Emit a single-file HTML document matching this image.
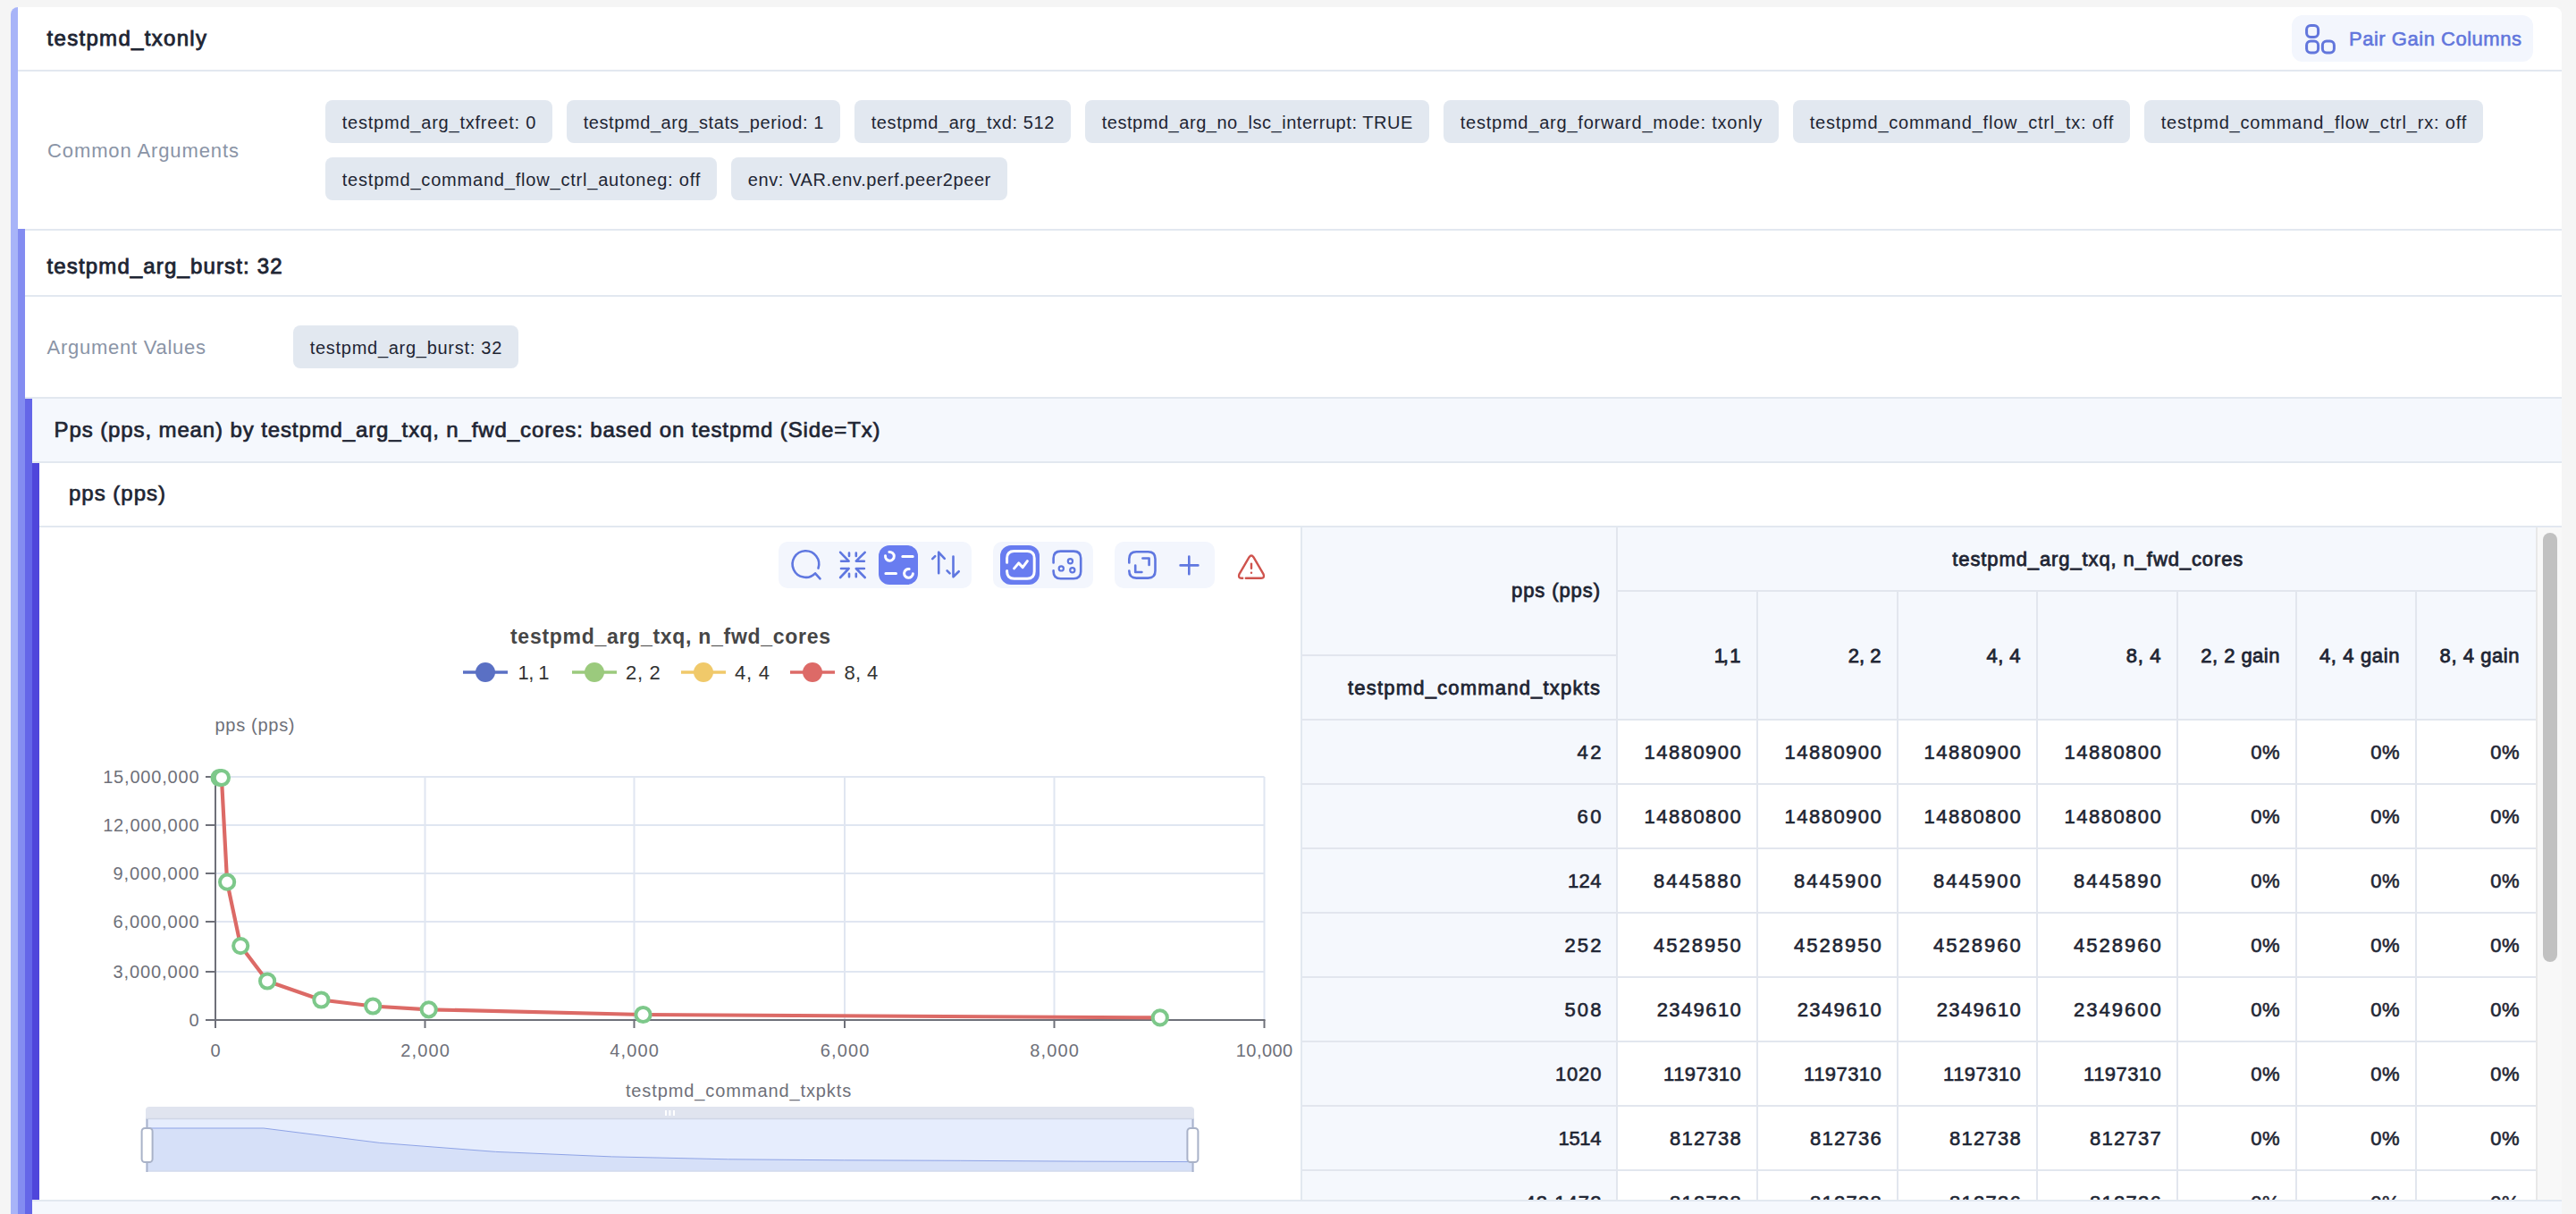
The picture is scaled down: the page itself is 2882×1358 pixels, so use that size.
<!DOCTYPE html>
<html><head><meta charset="utf-8">
<style>
html,body{margin:0;padding:0;}
body{width:2882px;height:1358px;overflow:hidden;background:#f5f5f5;position:relative;font-family:"Liberation Sans",sans-serif;color:#1e2533;}
.a{position:absolute;}
.t{position:absolute;white-space:nowrap;line-height:1;}
.ln{position:absolute;height:2px;background:#e2e8f0;}
svg{position:absolute;overflow:visible;}
</style></head><body>
<div class="a" style="left:12px;top:8px;width:2854px;height:1360px;background:#fff;border-radius:8px 8px 0 0;overflow:hidden;"><div class="a" style="left:0;top:0;width:8px;height:1360px;background:#a8b4f8;"></div></div>
<div class="a" style="left:2564px;top:17px;width:270px;height:52px;background:#f3f6fd;border-radius:12px;"></div>
<svg class="a" style="left:2576px;top:24px" width="40" height="40" viewBox="0 0 40 40"><g fill="none" stroke="#6276dc" stroke-width="3">
<rect x="4.6" y="4.6" width="13.0" height="12.8" rx="4.5"/><rect x="4.6" y="22.1" width="13.0" height="12.8" rx="4.5"/><rect x="22.4" y="22.1" width="13.0" height="12.8" rx="4.5"/></g></svg>
<div class="ln" style="left:20px;top:78px;width:2846px;"></div>
<div class="a" style="left:364px;top:112px;width:254px;height:48px;background:#e2e8f0;border-radius:8px;"></div>
<div class="a" style="left:634px;top:112px;width:306px;height:48px;background:#e2e8f0;border-radius:8px;"></div>
<div class="a" style="left:956px;top:112px;width:242px;height:48px;background:#e2e8f0;border-radius:8px;"></div>
<div class="a" style="left:1214px;top:112px;width:385px;height:48px;background:#e2e8f0;border-radius:8px;"></div>
<div class="a" style="left:1615px;top:112px;width:375px;height:48px;background:#e2e8f0;border-radius:8px;"></div>
<div class="a" style="left:2006px;top:112px;width:377px;height:48px;background:#e2e8f0;border-radius:8px;"></div>
<div class="a" style="left:2399px;top:112px;width:379px;height:48px;background:#e2e8f0;border-radius:8px;"></div>
<div class="a" style="left:364px;top:176px;width:438px;height:48px;background:#e2e8f0;border-radius:8px;"></div>
<div class="a" style="left:818px;top:176px;width:309px;height:48px;background:#e2e8f0;border-radius:8px;"></div>
<div class="a" style="left:328px;top:364px;width:252px;height:48px;background:#e2e8f0;border-radius:8px;"></div>
<div class="a" style="left:20px;top:256px;width:8px;height:1110px;background:#838cf1;"></div>
<div class="ln" style="left:28px;top:256px;width:2838px;"></div>
<div class="ln" style="left:28px;top:330px;width:2838px;"></div>
<div class="ln" style="left:28px;top:444px;width:2838px;"></div>
<div class="a" style="left:28px;top:446px;width:8px;height:920px;background:#6466e8;"></div>
<div class="a" style="left:36px;top:446px;width:2830px;height:70px;background:#f5f8fd;"></div>
<div class="ln" style="left:36px;top:516px;width:2830px;"></div>
<div class="a" style="left:36px;top:518px;width:8px;height:824px;background:#4f46db;"></div>
<div class="ln" style="left:44px;top:588px;width:2822px;"></div>
<div class="ln" style="left:36px;top:1342px;width:2830px;"></div>
<div class="a" style="left:36px;top:1344px;width:2830px;height:20px;background:#f5f8fd;"></div>
<div class="a" style="left:871px;top:606px;width:216px;height:52px;background:#f3f6fd;border-radius:10px;"></div>
<div class="a" style="left:1111px;top:606px;width:112px;height:52px;background:#f3f6fd;border-radius:10px;"></div>
<div class="a" style="left:1247px;top:606px;width:112px;height:52px;background:#f3f6fd;border-radius:10px;"></div>
<div class="a" style="left:983px;top:610px;width:44px;height:44px;background:#687cf0;border-radius:12px;"></div>
<div class="a" style="left:1119px;top:610px;width:44px;height:44px;background:#687cf0;border-radius:12px;"></div>
<svg class="a" style="left:0;top:0" width="2882" height="1358" viewBox="0 0 2882 1358"><g fill="none" stroke="#5f77e0" stroke-width="2.6" stroke-linecap="round" stroke-linejoin="round"><path d="M915.48,635.57 A14.8,14.8 0 1 0 912.05,641.28 L917.5,647.3"/><path d="M940.1,617.8 L949.6,627.7 M941,627.7 L949.6,627.7 M950,618.6 L950,622 M957.8,618.6 L957.8,622 M967.7,617.8 L957.8,627.7 L966.9,627.7"/><path d="M940.1,646 L949.6,636 M941,636 L949.6,636 M950,641.8 L950,645.2 M957.8,641.8 L957.8,645.2 M967.7,646 L957.8,636 L966.9,636"/><path d="M1050.2,617.8 L1050.2,641.2 M1050.2,617.8 L1056.8,624.8 M1043.2,625.2 L1046.2,622.2"/><path d="M1066.5,622.6 L1066.5,645.3 M1066.5,645.3 L1072.7,639.2 M1059.6,638.3 L1062.6,641.3"/><path d="M1178.6,629.4 L1178.6,624.6 Q1178.6,616.6 1186.6,616.6 L1201.2,616.6 Q1209.2,616.6 1209.2,624.6 L1209.2,639.3 Q1209.2,647.3 1201.2,647.3 L1186.6,647.3 Q1178.6,647.3 1178.6,639.3 L1178.6,638.4"/><circle cx="1197.4" cy="627.8" r="2.6" stroke-width="2.2"/><circle cx="1187.3" cy="635.9" r="2.6" stroke-width="2.2"/><circle cx="1199.8" cy="637.7" r="2.6" stroke-width="2.2"/><path d="M1263.3,629.4 L1263.3,625.3 Q1263.3,617.3 1271.3,617.3 L1284.5,617.3 Q1292.5,617.3 1292.5,625.3 L1292.5,638.6 Q1292.5,646.6 1284.5,646.6 L1271.3,646.6 Q1263.3,646.6 1263.3,638.6 L1263.3,638.8"/><path d="M1278.4,624.5 L1285.6,624.5 L1285.6,632 M1270.2,632.6 L1270.2,640 L1277.4,640"/><path d="M1320.6,632.4 L1340.4,632.4 M1330.3,622.6 L1330.3,642.2"/></g><g fill="none" stroke="#fff" stroke-width="3" stroke-linecap="round"><path d="M994.89,617.43 A4.9,4.9 0 1 1 990.54,621.70"/><path d="M1009.8,622.5 L1021.2,622.5 M990.9,641.4 L1002.5,641.4"/><path d="M1021.38,641.78 A4.9,4.9 0 1 1 1017.14,636.54"/><path d="M1126.6,629.2 L1126.6,624.4 Q1126.6,616.4 1134.6,616.4 L1149.2,616.4 Q1157.2,616.4 1157.2,624.4 L1157.2,639.3 Q1157.2,647.3 1149.2,647.3 L1134.6,647.3 Q1126.6,647.3 1126.6,639.3 L1126.6,638.6"/><path d="M1134.6,635.9 L1139.7,629.9 L1144.2,634.6 L1149.4,627.6" stroke-linejoin="round"/></g><g fill="none" stroke="#cf534d" stroke-width="2.4" stroke-linecap="round" stroke-linejoin="round"><path d="M1390.2,646.8 L1389,646.8 Q1384.8,646.8 1386.4,642.4 L1397.6,623.2 Q1400,619.8 1402.4,623.2 L1413.6,642.4 Q1415.2,646.8 1411,646.8 L1393.8,646.8"/><path d="M1400,630.6 L1400,635.8"/><path d="M1400,640.6 L1400,640.8"/></g><path d="M518,752 L568,752" stroke="#5a70c4" stroke-width="3.6"/><circle cx="543" cy="752" r="11" fill="#5a70c4"/><path d="M640,752 L690,752" stroke="#9bca7d" stroke-width="3.6"/><circle cx="665" cy="752" r="11" fill="#9bca7d"/><path d="M762,752 L812,752" stroke="#f0c96a" stroke-width="3.6"/><circle cx="787" cy="752" r="11" fill="#f0c96a"/><path d="M884,752 L934,752" stroke="#dd6a67" stroke-width="3.6"/><circle cx="909" cy="752" r="11" fill="#dd6a67"/><path d="M241,869 L1414.5,869" stroke="#e0e6f1" stroke-width="2"/><path d="M241,923 L1414.5,923" stroke="#e0e6f1" stroke-width="2"/><path d="M241,977 L1414.5,977" stroke="#e0e6f1" stroke-width="2"/><path d="M241,1031 L1414.5,1031" stroke="#e0e6f1" stroke-width="2"/><path d="M241,1087 L1414.5,1087" stroke="#e0e6f1" stroke-width="2"/><path d="M475.5,869 L475.5,1141" stroke="#e0e6f1" stroke-width="2"/><path d="M709.5,869 L709.5,1141" stroke="#e0e6f1" stroke-width="2"/><path d="M945,869 L945,1141" stroke="#e0e6f1" stroke-width="2"/><path d="M1179.5,869 L1179.5,1141" stroke="#e0e6f1" stroke-width="2"/><path d="M1414.5,869 L1414.5,1141" stroke="#e0e6f1" stroke-width="2"/><path d="M241,869 L241,1142 M240,1141 L1415.5,1141" stroke="#6e7079" stroke-width="2"/><path d="M230,869 L241,869" stroke="#6e7079" stroke-width="2"/><path d="M230,923 L241,923" stroke="#6e7079" stroke-width="2"/><path d="M230,977 L241,977" stroke="#6e7079" stroke-width="2"/><path d="M230,1031 L241,1031" stroke="#6e7079" stroke-width="2"/><path d="M230,1087 L241,1087" stroke="#6e7079" stroke-width="2"/><path d="M230,1141 L241,1141" stroke="#6e7079" stroke-width="2"/><path d="M241,1141 L241,1150" stroke="#6e7079" stroke-width="2"/><path d="M475.5,1141 L475.5,1150" stroke="#6e7079" stroke-width="2"/><path d="M709.5,1141 L709.5,1150" stroke="#6e7079" stroke-width="2"/><path d="M945,1141 L945,1150" stroke="#6e7079" stroke-width="2"/><path d="M1179.5,1141 L1179.5,1150" stroke="#6e7079" stroke-width="2"/><path d="M1414.5,1141 L1414.5,1150" stroke="#6e7079" stroke-width="2"/><path d="M245.6,870 L247.9,870 L254.1,986.7 L269.2,1058.1 L299.1,1097.5 L359.4,1118.5 L417.2,1125.5 L479.7,1129.3 L719.5,1135 L1297.8,1138.4" fill="none" stroke="#dc6a66" stroke-width="4.2" stroke-linejoin="round"/><circle cx="245.6" cy="870" r="8.1" fill="#fff" stroke="#7dc88a" stroke-width="4"/><circle cx="247.9" cy="870" r="8.1" fill="#fff" stroke="#7dc88a" stroke-width="4"/><circle cx="254.1" cy="986.7" r="8.1" fill="#fff" stroke="#7dc88a" stroke-width="4"/><circle cx="269.2" cy="1058.1" r="8.1" fill="#fff" stroke="#7dc88a" stroke-width="4"/><circle cx="299.1" cy="1097.5" r="8.1" fill="#fff" stroke="#7dc88a" stroke-width="4"/><circle cx="359.4" cy="1118.5" r="8.1" fill="#fff" stroke="#7dc88a" stroke-width="4"/><circle cx="417.2" cy="1125.5" r="8.1" fill="#fff" stroke="#7dc88a" stroke-width="4"/><circle cx="479.7" cy="1129.3" r="8.1" fill="#fff" stroke="#7dc88a" stroke-width="4"/><circle cx="719.5" cy="1135" r="8.1" fill="#fff" stroke="#7dc88a" stroke-width="4"/><circle cx="1297.8" cy="1138.4" r="8.1" fill="#fff" stroke="#7dc88a" stroke-width="4"/><path d="M163,1252 L163,1242 Q163,1238 167,1238 L1332,1238 Q1336,1238 1336,1242 L1336,1252 Z" fill="#e0e4ef"/><rect x="163" y="1252" width="1173" height="58.5" fill="#e6edfd"/><path d="M163,1251.5 L1336,1251.5" stroke="#cfd6e6" stroke-width="1.5"/><path d="M165,1310.5 L165.0,1262.0 L294.9,1262.0 L424.8,1278.4 L554.7,1288.4 L684.6,1293.9 L814.4,1296.8 L944.3,1297.8 L1074.2,1298.3 L1204.1,1299.1 L1334.0,1299.6 L1334,1310.5 Z" fill="#d6e0f8"/><path d="M165.0,1262.0 L294.9,1262.0 L424.8,1278.4 L554.7,1288.4 L684.6,1293.9 L814.4,1296.8 L944.3,1297.8 L1074.2,1298.3 L1204.1,1299.1 L1334.0,1299.6" fill="none" stroke="#8ea3e6" stroke-width="1"/><path d="M163,1310 L1336,1310" stroke="#d3d9e8" stroke-width="1"/><path d="M745,1242 L745,1248 M749.4,1242 L749.4,1248 M754,1242 L754,1248" stroke="#fff" stroke-width="2"/><path d="M164.5,1252 L164.5,1311 M1334.5,1252 L1334.5,1311" stroke="#a9b3cc" stroke-width="2"/><rect x="158.6" y="1262" width="12" height="38" rx="3.5" fill="#fff" stroke="#a9b2c8" stroke-width="2"/><rect x="1328.4" y="1262" width="12" height="38" rx="3.5" fill="#fff" stroke="#a9b2c8" stroke-width="2"/></svg>
<div class="a" style="left:1455px;top:590px;width:2px;height:752px;background:#e2e8f0;"></div>
<div class="a" style="left:1457px;top:590px;width:1380px;height:215px;background:#f5f8fd;"></div>
<div class="a" style="left:1457px;top:805px;width:352px;height:537px;background:#f5f8fd;"></div>
<div class="a" style="left:2837px;top:590px;width:29px;height:752px;background:#f8f8f8;border-left:2px solid #e8e8e8;box-sizing:border-box;"></div>
<div class="a" style="left:2845px;top:596px;width:16px;height:480px;background:#c1c1c1;border-radius:8px;"></div>
<div class="a" style="left:1808px;top:590px;width:2px;height:752px;background:#e2e6ee;"></div>
<div class="a" style="left:1965px;top:661px;width:2px;height:681px;background:#e2e6ee;"></div>
<div class="a" style="left:2122px;top:661px;width:2px;height:681px;background:#e2e6ee;"></div>
<div class="a" style="left:2278px;top:661px;width:2px;height:681px;background:#e2e6ee;"></div>
<div class="a" style="left:2435px;top:661px;width:2px;height:681px;background:#e2e6ee;"></div>
<div class="a" style="left:2568px;top:661px;width:2px;height:681px;background:#e2e6ee;"></div>
<div class="a" style="left:2702px;top:661px;width:2px;height:681px;background:#e2e6ee;"></div>
<div class="a" style="left:1809px;top:660px;width:1028px;height:2px;background:#e2e6ee;"></div>
<div class="a" style="left:1457px;top:732px;width:352px;height:2px;background:#e2e6ee;"></div>
<div class="a" style="left:1457px;top:804px;width:1380px;height:2px;background:#e2e6ee;"></div>
<div class="a" style="left:1457px;top:876px;width:1380px;height:2px;background:#e2e6ee;"></div>
<div class="a" style="left:1457px;top:948px;width:1380px;height:2px;background:#e2e6ee;"></div>
<div class="a" style="left:1457px;top:1020px;width:1380px;height:2px;background:#e2e6ee;"></div>
<div class="a" style="left:1457px;top:1092px;width:1380px;height:2px;background:#e2e6ee;"></div>
<div class="a" style="left:1457px;top:1164px;width:1380px;height:2px;background:#e2e6ee;"></div>
<div class="a" style="left:1457px;top:1236px;width:1380px;height:2px;background:#e2e6ee;"></div>
<div class="a" style="left:1457px;top:1308px;width:1380px;height:2px;background:#e2e6ee;"></div>
<div class="ln" style="left:36px;top:1342px;width:2830px;"></div>
<div class="a" style="left:36px;top:1344px;width:2830px;height:20px;background:#f5f8fd;"></div>
<div class="t" style="left:52.5px;top:31.0px;font-size:24px;color:#1e2533;letter-spacing:1.314px;-webkit-text-stroke:0.85px #1e2533;">testpmd_txonly</div>
<div class="t" style="left:2628.0px;top:33.0px;font-size:22px;color:#6276dc;letter-spacing:0.522px;-webkit-text-stroke:0.6px #6276dc;">Pair Gain Columns</div>
<div class="t" style="left:53.0px;top:158.0px;font-size:22px;color:#8a94a6;letter-spacing:0.898px;">Common Arguments</div>
<div class="t" style="left:382.7px;top:127.3px;font-size:20px;color:#1e2533;letter-spacing:0.785px;">testpmd_arg_txfreet: 0</div>
<div class="t" style="left:652.7px;top:127.3px;font-size:20px;color:#1e2533;letter-spacing:0.581px;">testpmd_arg_stats_period: 1</div>
<div class="t" style="left:974.7px;top:127.3px;font-size:20px;color:#1e2533;letter-spacing:0.586px;">testpmd_arg_txd: 512</div>
<div class="t" style="left:1232.7px;top:127.3px;font-size:20px;color:#1e2533;letter-spacing:0.539px;">testpmd_arg_no_lsc_interrupt: TRUE</div>
<div class="t" style="left:1633.7px;top:127.3px;font-size:20px;color:#1e2533;letter-spacing:0.777px;">testpmd_arg_forward_mode: txonly</div>
<div class="t" style="left:2024.7px;top:127.3px;font-size:20px;color:#1e2533;letter-spacing:0.793px;">testpmd_command_flow_ctrl_tx: off</div>
<div class="t" style="left:2417.7px;top:127.3px;font-size:20px;color:#1e2533;letter-spacing:0.821px;">testpmd_command_flow_ctrl_rx: off</div>
<div class="t" style="left:382.7px;top:191.3px;font-size:20px;color:#1e2533;letter-spacing:0.801px;">testpmd_command_flow_ctrl_autoneg: off</div>
<div class="t" style="left:836.7px;top:191.3px;font-size:20px;color:#1e2533;letter-spacing:0.597px;">env: VAR.env.perf.peer2peer</div>
<div class="t" style="left:346.7px;top:379.3px;font-size:20px;color:#1e2533;letter-spacing:0.724px;">testpmd_arg_burst: 32</div>
<div class="t" style="left:52.5px;top:286.0px;font-size:24px;color:#1e2533;letter-spacing:1.143px;-webkit-text-stroke:0.85px #1e2533;">testpmd_arg_burst: 32</div>
<div class="t" style="left:52.5px;top:378.0px;font-size:22px;color:#8a94a6;letter-spacing:0.740px;">Argument Values</div>
<div class="t" style="left:60.6px;top:469.0px;font-size:24px;color:#1e2533;letter-spacing:0.886px;-webkit-text-stroke:0.7px #1e2533;">Pps (pps, mean) by testpmd_arg_txq, n_fwd_cores: based on testpmd (Side=Tx)</div>
<div class="t" style="left:77.0px;top:540.0px;font-size:24px;color:#1e2533;letter-spacing:0.994px;-webkit-text-stroke:0.7px #1e2533;">pps (pps)</div>
<div class="t" style="left:579.6px;top:741.6px;font-size:22px;color:#333;letter-spacing:-0.568px;">1, 1</div>
<div class="t" style="left:700.0px;top:741.6px;font-size:22px;color:#333;letter-spacing:0.666px;">2, 2</div>
<div class="t" style="left:822.0px;top:741.6px;font-size:22px;color:#333;letter-spacing:0.766px;">4, 4</div>
<div class="t" style="left:944.5px;top:741.6px;font-size:22px;color:#333;letter-spacing:0.366px;">8, 4</div>
<div class="t" style="left:571.0px;top:701.0px;font-size:23px;color:#464646;font-weight:700;letter-spacing:0.714px;">testpmd_arg_txq, n_fwd_cores</div>
<div class="t" style="left:115.2px;top:859.0px;font-size:20px;color:#6e7079;letter-spacing:0.810px;">15,000,000</div>
<div class="t" style="left:115.2px;top:913.0px;font-size:20px;color:#6e7079;letter-spacing:0.810px;">12,000,000</div>
<div class="t" style="left:126.6px;top:967.0px;font-size:20px;color:#6e7079;letter-spacing:0.877px;">9,000,000</div>
<div class="t" style="left:126.6px;top:1021.0px;font-size:20px;color:#6e7079;letter-spacing:0.877px;">6,000,000</div>
<div class="t" style="left:126.6px;top:1077.0px;font-size:20px;color:#6e7079;letter-spacing:0.877px;">3,000,000</div>
<div class="t" style="left:211.5px;top:1131.0px;font-size:20px;color:#6e7079;letter-spacing:1.375px;">0</div>
<div class="t" style="left:235.4px;top:1165.0px;font-size:20px;color:#6e7079;letter-spacing:1.375px;">0</div>
<div class="t" style="left:448.2px;top:1165.0px;font-size:20px;color:#6e7079;letter-spacing:1.134px;">2,000</div>
<div class="t" style="left:682.2px;top:1165.0px;font-size:20px;color:#6e7079;letter-spacing:1.134px;">4,000</div>
<div class="t" style="left:917.7px;top:1165.0px;font-size:20px;color:#6e7079;letter-spacing:1.134px;">6,000</div>
<div class="t" style="left:1152.2px;top:1165.0px;font-size:20px;color:#6e7079;letter-spacing:1.134px;">8,000</div>
<div class="t" style="left:1382.8px;top:1165.0px;font-size:20px;color:#6e7079;letter-spacing:0.446px;">10,000</div>
<div class="t" style="left:240.5px;top:801.0px;font-size:20px;color:#6e7079;letter-spacing:0.703px;">pps (pps)</div>
<div class="t" style="left:699.9px;top:1210.0px;font-size:20px;color:#6e7079;letter-spacing:0.898px;">testpmd_command_txpkts</div>
<div class="t" style="left:1691.0px;top:650.0px;font-size:22px;color:#1e2533;letter-spacing:0.910px;-webkit-text-stroke:0.8px #1e2533;">pps (pps)</div>
<div class="t" style="left:1508.0px;top:758.7px;font-size:22px;color:#1e2533;letter-spacing:1.201px;-webkit-text-stroke:0.8px #1e2533;">testpmd_command_txpkts</div>
<div class="t" style="left:2184.3px;top:615.0px;font-size:22px;color:#1e2533;letter-spacing:0.895px;-webkit-text-stroke:0.8px #1e2533;">testpmd_arg_txq, n_fwd_cores</div>
<div class="t" style="left:1917.8px;top:723.0px;font-size:22px;color:#1e2533;letter-spacing:-2.368px;-webkit-text-stroke:0.8px #1e2533;">1, 1</div>
<div class="t" style="left:2067.8px;top:723.0px;font-size:22px;color:#1e2533;letter-spacing:-0.034px;-webkit-text-stroke:0.8px #1e2533;">2, 2</div>
<div class="t" style="left:2222.5px;top:723.0px;font-size:22px;color:#1e2533;letter-spacing:0.399px;-webkit-text-stroke:0.8px #1e2533;">4, 4</div>
<div class="t" style="left:2378.8px;top:723.0px;font-size:22px;color:#1e2533;letter-spacing:0.632px;-webkit-text-stroke:0.8px #1e2533;">8, 4</div>
<div class="t" style="left:2462.3px;top:723.0px;font-size:22px;color:#1e2533;letter-spacing:0.462px;-webkit-text-stroke:0.8px #1e2533;">2, 2 gain</div>
<div class="t" style="left:2594.9px;top:723.0px;font-size:22px;color:#1e2533;letter-spacing:0.637px;-webkit-text-stroke:0.8px #1e2533;">4, 4 gain</div>
<div class="t" style="left:2729.6px;top:723.0px;font-size:22px;color:#1e2533;letter-spacing:0.549px;-webkit-text-stroke:0.8px #1e2533;">8, 4 gain</div>
<div class="t" style="left:1764.6px;top:831.0px;font-size:22px;color:#1e2533;letter-spacing:2.316px;-webkit-text-stroke:0.6px #1e2533;">42</div>
<div class="t" style="left:1839.5px;top:831.0px;font-size:22px;color:#1e2533;letter-spacing:1.487px;-webkit-text-stroke:0.6px #1e2533;">14880900</div>
<div class="t" style="left:1996.5px;top:831.0px;font-size:22px;color:#1e2533;letter-spacing:1.487px;-webkit-text-stroke:0.6px #1e2533;">14880900</div>
<div class="t" style="left:2152.5px;top:831.0px;font-size:22px;color:#1e2533;letter-spacing:1.487px;-webkit-text-stroke:0.6px #1e2533;">14880900</div>
<div class="t" style="left:2309.5px;top:831.0px;font-size:22px;color:#1e2533;letter-spacing:1.487px;-webkit-text-stroke:0.6px #1e2533;">14880800</div>
<div class="t" style="left:2518.2px;top:831.0px;font-size:22px;color:#1e2533;letter-spacing:0.503px;-webkit-text-stroke:0.6px #1e2533;">0%</div>
<div class="t" style="left:2652.2px;top:831.0px;font-size:22px;color:#1e2533;letter-spacing:0.503px;-webkit-text-stroke:0.6px #1e2533;">0%</div>
<div class="t" style="left:2786.2px;top:831.0px;font-size:22px;color:#1e2533;letter-spacing:0.503px;-webkit-text-stroke:0.6px #1e2533;">0%</div>
<div class="t" style="left:1764.6px;top:903.0px;font-size:22px;color:#1e2533;letter-spacing:2.316px;-webkit-text-stroke:0.6px #1e2533;">60</div>
<div class="t" style="left:1839.5px;top:903.0px;font-size:22px;color:#1e2533;letter-spacing:1.487px;-webkit-text-stroke:0.6px #1e2533;">14880800</div>
<div class="t" style="left:1996.5px;top:903.0px;font-size:22px;color:#1e2533;letter-spacing:1.487px;-webkit-text-stroke:0.6px #1e2533;">14880900</div>
<div class="t" style="left:2152.5px;top:903.0px;font-size:22px;color:#1e2533;letter-spacing:1.487px;-webkit-text-stroke:0.6px #1e2533;">14880800</div>
<div class="t" style="left:2309.5px;top:903.0px;font-size:22px;color:#1e2533;letter-spacing:1.487px;-webkit-text-stroke:0.6px #1e2533;">14880800</div>
<div class="t" style="left:2518.2px;top:903.0px;font-size:22px;color:#1e2533;letter-spacing:0.503px;-webkit-text-stroke:0.6px #1e2533;">0%</div>
<div class="t" style="left:2652.2px;top:903.0px;font-size:22px;color:#1e2533;letter-spacing:0.503px;-webkit-text-stroke:0.6px #1e2533;">0%</div>
<div class="t" style="left:2786.2px;top:903.0px;font-size:22px;color:#1e2533;letter-spacing:0.503px;-webkit-text-stroke:0.6px #1e2533;">0%</div>
<div class="t" style="left:1754.1px;top:975.0px;font-size:22px;color:#1e2533;letter-spacing:0.291px;-webkit-text-stroke:0.6px #1e2533;">124</div>
<div class="t" style="left:1850.0px;top:975.0px;font-size:22px;color:#1e2533;letter-spacing:2.024px;-webkit-text-stroke:0.6px #1e2533;">8445880</div>
<div class="t" style="left:2007.0px;top:975.0px;font-size:22px;color:#1e2533;letter-spacing:2.024px;-webkit-text-stroke:0.6px #1e2533;">8445900</div>
<div class="t" style="left:2163.0px;top:975.0px;font-size:22px;color:#1e2533;letter-spacing:2.024px;-webkit-text-stroke:0.6px #1e2533;">8445900</div>
<div class="t" style="left:2320.0px;top:975.0px;font-size:22px;color:#1e2533;letter-spacing:2.024px;-webkit-text-stroke:0.6px #1e2533;">8445890</div>
<div class="t" style="left:2518.2px;top:975.0px;font-size:22px;color:#1e2533;letter-spacing:0.503px;-webkit-text-stroke:0.6px #1e2533;">0%</div>
<div class="t" style="left:2652.2px;top:975.0px;font-size:22px;color:#1e2533;letter-spacing:0.503px;-webkit-text-stroke:0.6px #1e2533;">0%</div>
<div class="t" style="left:2786.2px;top:975.0px;font-size:22px;color:#1e2533;letter-spacing:0.503px;-webkit-text-stroke:0.6px #1e2533;">0%</div>
<div class="t" style="left:1750.4px;top:1047.0px;font-size:22px;color:#1e2533;letter-spacing:2.141px;-webkit-text-stroke:0.6px #1e2533;">252</div>
<div class="t" style="left:1850.0px;top:1047.0px;font-size:22px;color:#1e2533;letter-spacing:2.024px;-webkit-text-stroke:0.6px #1e2533;">4528950</div>
<div class="t" style="left:2007.0px;top:1047.0px;font-size:22px;color:#1e2533;letter-spacing:2.024px;-webkit-text-stroke:0.6px #1e2533;">4528950</div>
<div class="t" style="left:2163.0px;top:1047.0px;font-size:22px;color:#1e2533;letter-spacing:2.024px;-webkit-text-stroke:0.6px #1e2533;">4528960</div>
<div class="t" style="left:2320.0px;top:1047.0px;font-size:22px;color:#1e2533;letter-spacing:2.024px;-webkit-text-stroke:0.6px #1e2533;">4528960</div>
<div class="t" style="left:2518.2px;top:1047.0px;font-size:22px;color:#1e2533;letter-spacing:0.503px;-webkit-text-stroke:0.6px #1e2533;">0%</div>
<div class="t" style="left:2652.2px;top:1047.0px;font-size:22px;color:#1e2533;letter-spacing:0.503px;-webkit-text-stroke:0.6px #1e2533;">0%</div>
<div class="t" style="left:2786.2px;top:1047.0px;font-size:22px;color:#1e2533;letter-spacing:0.503px;-webkit-text-stroke:0.6px #1e2533;">0%</div>
<div class="t" style="left:1750.4px;top:1119.0px;font-size:22px;color:#1e2533;letter-spacing:2.141px;-webkit-text-stroke:0.6px #1e2533;">508</div>
<div class="t" style="left:1853.7px;top:1119.0px;font-size:22px;color:#1e2533;letter-spacing:1.407px;-webkit-text-stroke:0.6px #1e2533;">2349610</div>
<div class="t" style="left:2010.7px;top:1119.0px;font-size:22px;color:#1e2533;letter-spacing:1.407px;-webkit-text-stroke:0.6px #1e2533;">2349610</div>
<div class="t" style="left:2166.7px;top:1119.0px;font-size:22px;color:#1e2533;letter-spacing:1.407px;-webkit-text-stroke:0.6px #1e2533;">2349610</div>
<div class="t" style="left:2320.0px;top:1119.0px;font-size:22px;color:#1e2533;letter-spacing:2.024px;-webkit-text-stroke:0.6px #1e2533;">2349600</div>
<div class="t" style="left:2518.2px;top:1119.0px;font-size:22px;color:#1e2533;letter-spacing:0.503px;-webkit-text-stroke:0.6px #1e2533;">0%</div>
<div class="t" style="left:2652.2px;top:1119.0px;font-size:22px;color:#1e2533;letter-spacing:0.503px;-webkit-text-stroke:0.6px #1e2533;">0%</div>
<div class="t" style="left:2786.2px;top:1119.0px;font-size:22px;color:#1e2533;letter-spacing:0.503px;-webkit-text-stroke:0.6px #1e2533;">0%</div>
<div class="t" style="left:1739.9px;top:1191.0px;font-size:22px;color:#1e2533;letter-spacing:0.849px;-webkit-text-stroke:0.6px #1e2533;">1020</div>
<div class="t" style="left:1861.1px;top:1191.0px;font-size:22px;color:#1e2533;letter-spacing:0.447px;-webkit-text-stroke:0.6px #1e2533;">1197310</div>
<div class="t" style="left:2018.1px;top:1191.0px;font-size:22px;color:#1e2533;letter-spacing:0.447px;-webkit-text-stroke:0.6px #1e2533;">1197310</div>
<div class="t" style="left:2174.1px;top:1191.0px;font-size:22px;color:#1e2533;letter-spacing:0.447px;-webkit-text-stroke:0.6px #1e2533;">1197310</div>
<div class="t" style="left:2331.1px;top:1191.0px;font-size:22px;color:#1e2533;letter-spacing:0.447px;-webkit-text-stroke:0.6px #1e2533;">1197310</div>
<div class="t" style="left:2518.2px;top:1191.0px;font-size:22px;color:#1e2533;letter-spacing:0.503px;-webkit-text-stroke:0.6px #1e2533;">0%</div>
<div class="t" style="left:2652.2px;top:1191.0px;font-size:22px;color:#1e2533;letter-spacing:0.503px;-webkit-text-stroke:0.6px #1e2533;">0%</div>
<div class="t" style="left:2786.2px;top:1191.0px;font-size:22px;color:#1e2533;letter-spacing:0.503px;-webkit-text-stroke:0.6px #1e2533;">0%</div>
<div class="t" style="left:1743.6px;top:1263.0px;font-size:22px;color:#1e2533;letter-spacing:-0.384px;-webkit-text-stroke:0.6px #1e2533;">1514</div>
<div class="t" style="left:1867.9px;top:1263.0px;font-size:22px;color:#1e2533;letter-spacing:1.296px;-webkit-text-stroke:0.6px #1e2533;">812738</div>
<div class="t" style="left:2024.9px;top:1263.0px;font-size:22px;color:#1e2533;letter-spacing:1.296px;-webkit-text-stroke:0.6px #1e2533;">812736</div>
<div class="t" style="left:2180.9px;top:1263.0px;font-size:22px;color:#1e2533;letter-spacing:1.296px;-webkit-text-stroke:0.6px #1e2533;">812738</div>
<div class="t" style="left:2337.9px;top:1263.0px;font-size:22px;color:#1e2533;letter-spacing:1.296px;-webkit-text-stroke:0.6px #1e2533;">812737</div>
<div class="t" style="left:2518.2px;top:1263.0px;font-size:22px;color:#1e2533;letter-spacing:0.503px;-webkit-text-stroke:0.6px #1e2533;">0%</div>
<div class="t" style="left:2652.2px;top:1263.0px;font-size:22px;color:#1e2533;letter-spacing:0.503px;-webkit-text-stroke:0.6px #1e2533;">0%</div>
<div class="t" style="left:2786.2px;top:1263.0px;font-size:22px;color:#1e2533;letter-spacing:0.503px;-webkit-text-stroke:0.6px #1e2533;">0%</div>
<div class="t" style="left:1705.5px;top:1335.0px;font-size:22px;color:#1e2533;letter-spacing:1.061px;-webkit-text-stroke:0.6px #1e2533;">42,1472</div>
<div class="t" style="left:1867.9px;top:1335.0px;font-size:22px;color:#1e2533;letter-spacing:1.296px;-webkit-text-stroke:0.6px #1e2533;">812738</div>
<div class="t" style="left:2024.9px;top:1335.0px;font-size:22px;color:#1e2533;letter-spacing:1.296px;-webkit-text-stroke:0.6px #1e2533;">812738</div>
<div class="t" style="left:2180.9px;top:1335.0px;font-size:22px;color:#1e2533;letter-spacing:1.296px;-webkit-text-stroke:0.6px #1e2533;">812736</div>
<div class="t" style="left:2337.9px;top:1335.0px;font-size:22px;color:#1e2533;letter-spacing:1.296px;-webkit-text-stroke:0.6px #1e2533;">812736</div>
<div class="t" style="left:2518.2px;top:1335.0px;font-size:22px;color:#1e2533;letter-spacing:0.503px;-webkit-text-stroke:0.6px #1e2533;">0%</div>
<div class="t" style="left:2652.2px;top:1335.0px;font-size:22px;color:#1e2533;letter-spacing:0.503px;-webkit-text-stroke:0.6px #1e2533;">0%</div>
<div class="t" style="left:2786.2px;top:1335.0px;font-size:22px;color:#1e2533;letter-spacing:0.503px;-webkit-text-stroke:0.6px #1e2533;">0%</div>
<div class="ln" style="left:36px;top:1342px;width:2830px;"></div>
<div class="a" style="left:36px;top:1344px;width:2830px;height:20px;background:#f5f8fd;"></div>
</body></html>
